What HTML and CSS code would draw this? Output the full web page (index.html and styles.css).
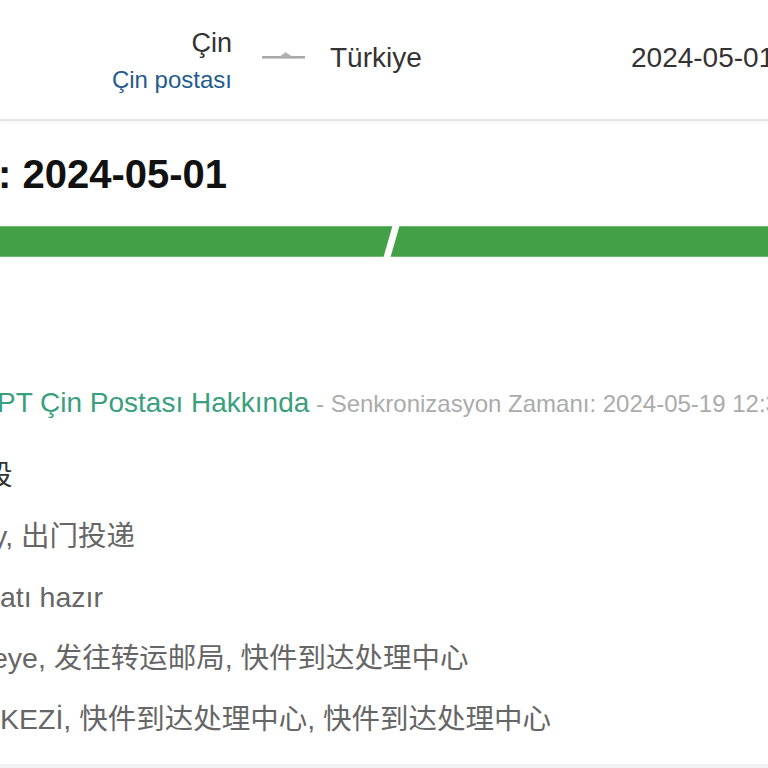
FILE: index.html
```html
<!DOCTYPE html>
<html lang="tr">
<head>
<meta charset="utf-8">
<title>Gönderi Takibi</title>
<link rel="stylesheet" href="styles.css">
</head>
<body>
<div class="page">
  <header class="route">
    <div class="origin">
      <div class="origin-name">Çin</div>
      <div class="origin-carrier">Çin postası</div>
    </div>
    <svg class="arrow" viewBox="0 0 44 12" width="44" height="12" aria-hidden="true">
      <rect x="0" y="5" width="43" height="2.6" fill="#a9a9a9"/>
      <polygon points="17,6 23.5,1.2 31,6" fill="#b0b0b0"/>
    </svg>
    <div class="dest">Türkiye</div>
    <div class="date">2024-05-01</div>
  </header>

  <h1 class="eta">: 2024-05-01</h1>

  <div class="progress"></div>

  <div class="source"><span class="source-name">PT Çin Postası Hakkında</span><span class="sync"> - Senkronizasyon Zamanı: 2024-05-19 12:36:08</span></div>

  <ul class="events">
    <li class="event event-current cut-glyph">段</li>
    <li class="event cut-y">y, 出门投递</li>
    <li class="event cut-none">atı hazır</li>
    <li class="event cut-e">eye, 发往转运邮局, 快件到达处理中心</li>
    <li class="event cut-none">KEZİ, 快件到达处理中心, 快件到达处理中心</li>
  </ul>

  <div class="bottom-rule"></div>
</div>
</body>
</html>
```

FILE: styles.css
```css
html, body {
  margin: 0;
  padding: 0;
  background: #ffffff;
}

body {
  width: 768px;
  height: 768px;
  overflow: hidden;
  font-family: "Liberation Sans", "Noto Sans CJK SC", Arial, sans-serif;
  color: #333333;
}

.page {
  white-space: nowrap;
}

/* Route header */
.route {
  display: flex;
  align-items: flex-start;
  height: 119px;
  border-bottom: 2px solid #e4e4e4;
  box-shadow: 0 2px 3px rgba(0, 0, 0, 0.03);
}

.origin {
  width: 232px;
  padding-top: 27px;
  text-align: right;
  flex: none;
}

.origin-name {
  font-size: 27px;
  line-height: 32px;
  color: #333333;
}

.origin-carrier {
  margin-top: 5px;
  font-size: 24px;
  line-height: 32px;
  color: #245b8f;
}

.arrow {
  flex: none;
  margin-left: 30px;
  margin-top: 51px;
}

.dest {
  flex: none;
  width: 301px;
  margin-left: 24px;
  padding-top: 42px;
  font-size: 28px;
  line-height: 32px;
  color: #333333;
}

.date {
  flex: none;
  padding-top: 42px;
  font-size: 28px;
  line-height: 32px;
  color: #333333;
}

/* ETA heading */
.eta {
  margin: 29px 0 0;
  font-size: 40px;
  line-height: 48px;
  font-weight: bold;
  color: #111111;
  text-indent: -2px;
}

/* Progress bar */
.progress {
  position: relative;
  margin-top: 28px;
  height: 31px;
  background: #43a047;
  box-shadow: inset 0 1px 0 #6dbb6d, inset 0 -1px 0 #6dbb6d;
}

.progress::after {
  content: "";
  position: absolute;
  left: 388px;
  top: 0;
  width: 7px;
  height: 100%;
  background: #ffffff;
  transform: skewX(-16deg);
}

/* Source / sync line */
.source {
  margin-top: 130px;
  font-size: 28px;
  line-height: 32px;
  text-indent: -3px;
}

.source-name {
  color: #3a9f7c;
}

.sync {
  font-size: 24px;
  color: #ababab;
}

/* Events */
.events {
  list-style: none;
  margin: 25px 0 0;
  padding: 0;
}

.event {
  height: 61px;
  font-size: 28.5px;
  line-height: 61px;
  color: #666666;
}

.event-current {
  color: #333333;
}

.cut-glyph {
  text-indent: -16px;
}

.cut-y {
  text-indent: -7px;
}

.cut-e {
  text-indent: -8px;
}

.cut-none {
  text-indent: 0;
}

.bottom-rule {
  margin-top: 14px;
  border-top: 5px solid #f1f1f4;
}
```
